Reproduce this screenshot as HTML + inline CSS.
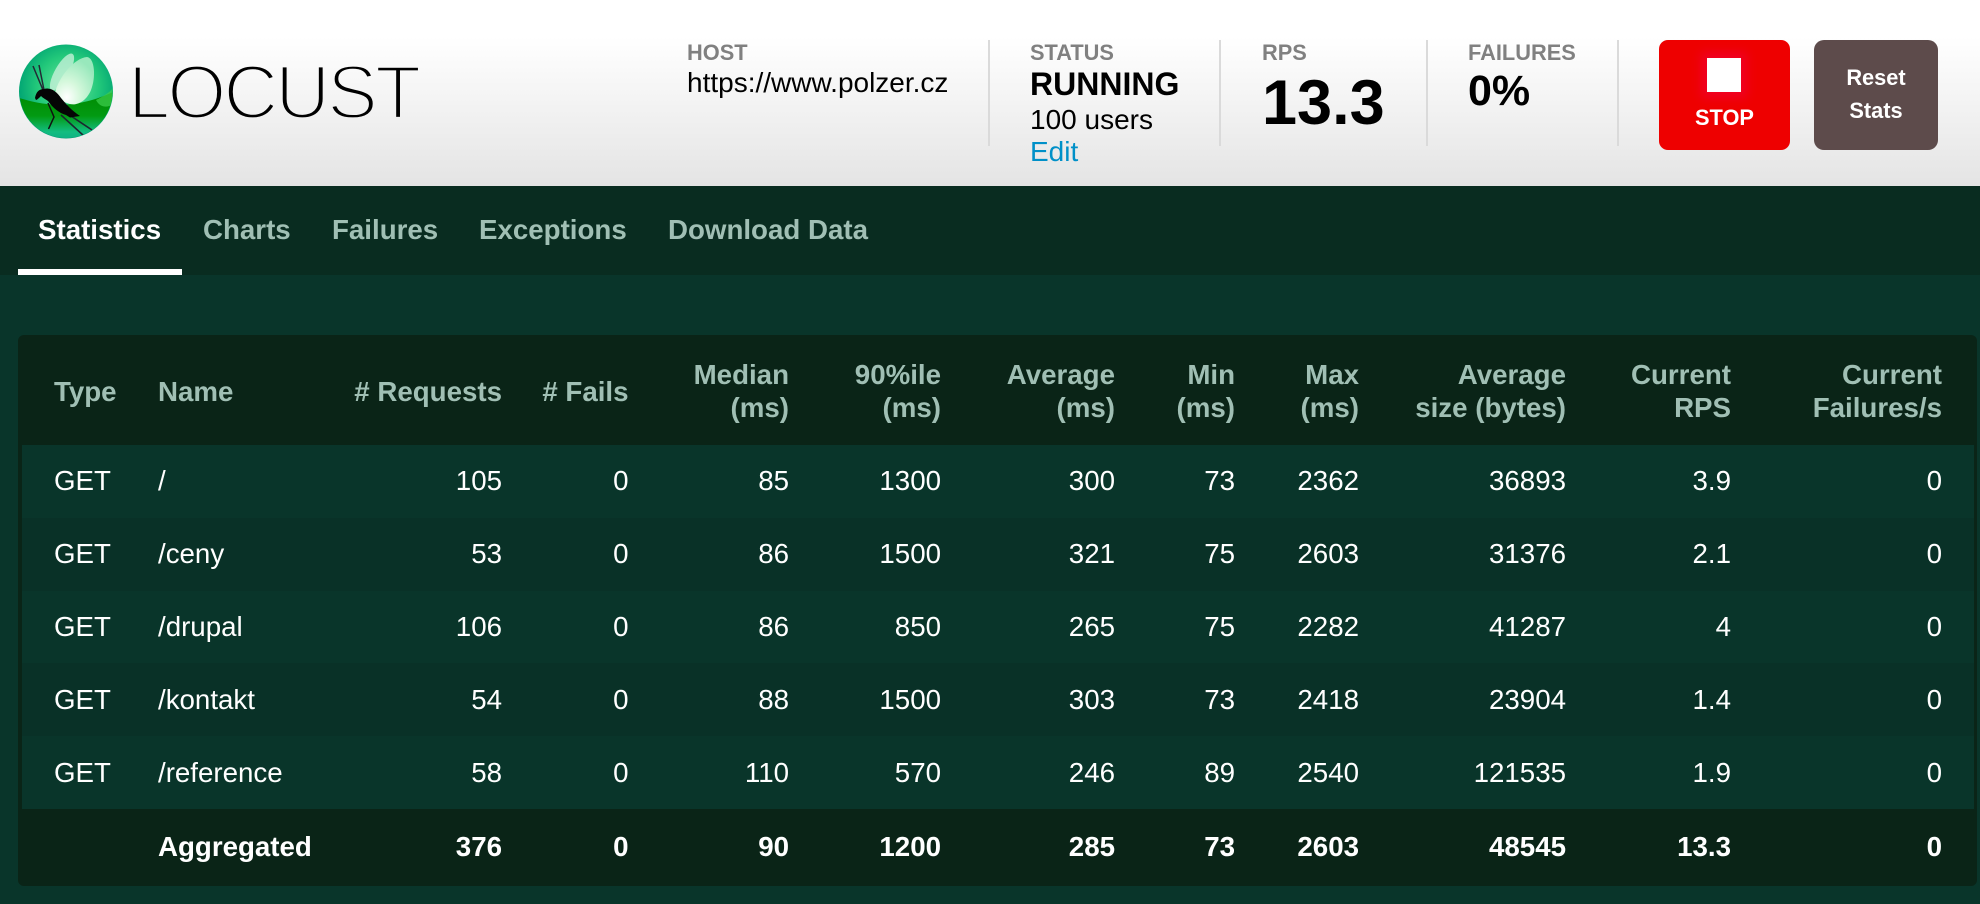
<!DOCTYPE html>
<html lang="en"><head><meta charset="utf-8"><title>Locust</title>
<style>
*{box-sizing:border-box}
html,body{margin:0;padding:0;width:1980px;height:904px;overflow:hidden;background:#09352a;font-family:"Liberation Sans",Arial,sans-serif}
.abs{position:absolute;white-space:nowrap;line-height:1}
header{position:absolute;left:0;top:0;width:1980px;height:186px;background:linear-gradient(#fff 0,#fff 20%,#e4e4e4 100%)}
.lbl{font-size:21.8px;font-weight:700;color:#808080}
.val{font-size:28px;color:#000}
.sep{position:absolute;top:40px;width:2px;height:106px;background:#dadada}
nav{position:absolute;left:0;top:186px;width:1980px;height:89px;background:#092c20}
nav span{position:absolute;top:30px;font-size:27.7px;line-height:1;font-weight:700;color:#a0bfb4;white-space:nowrap}
.ul{position:absolute;left:18px;top:83px;width:164px;height:6px;background:#fff}
.wrap{position:absolute;left:18px;top:335px;width:1959px;height:551px;background:#0a2417;border-radius:6px}
table{position:absolute;left:22px;top:335px;width:1952px;border-collapse:collapse;table-layout:fixed;font-size:27.7px;color:#fff}
th,td{padding:0;text-align:right;white-space:nowrap;overflow:visible}
th{height:110px;line-height:33px;color:#a0bfb4;font-weight:700;vertical-align:middle;padding-top:2px}
td{height:72.8px;line-height:32px}
.l{text-align:left}
tbody tr:nth-child(odd){background:#09352a}
tbody tr:nth-child(even){background:#093127}
tbody tr.agg{background:transparent;font-weight:700}
.agg td{height:77px}
</style></head><body>
<header>
<svg class="abs" style="left:0;top:0" width="440" height="186" viewBox="0 0 440 186">
<defs>
<linearGradient id="hg" gradientUnits="userSpaceOnUse" x1="0" y1="37" x2="0" y2="186"><stop offset="0" stop-color="#fff"/><stop offset="1" stop-color="#e4e4e4"/></linearGradient>
<radialGradient id="g1" cx="52%" cy="45%" r="60%"><stop offset="0" stop-color="#6fe8a0"/><stop offset=".55" stop-color="#22c87a"/><stop offset=".85" stop-color="#04a874"/><stop offset="1" stop-color="#068a72"/></radialGradient>
<linearGradient id="g2" x1="0" y1="0" x2="0" y2="1"><stop offset="0" stop-color="#008a00"/><stop offset=".45" stop-color="#029a12"/><stop offset=".75" stop-color="#12bd80"/><stop offset="1" stop-color="#0aa888"/></linearGradient>
<radialGradient id="g3" cx="30%" cy="85%" r="85%"><stop offset="0" stop-color="#fff"/><stop offset=".4" stop-color="#d5f8dc"/><stop offset="1" stop-color="#98e8bc"/></radialGradient>
<clipPath id="c"><circle cx="66" cy="91.5" r="46.5"/></clipPath>
</defs>
<circle cx="66" cy="91.5" r="47" fill="url(#g1)"/>
<g clip-path="url(#c)">
<path d="M19 98C40 104 70 112 113 92V145H19Z" fill="url(#g2)"/>
<path d="M96 100C104 96 110 92 113 88V104C108 108 100 108 96 100Z" fill="#3fd050" opacity=".7"/>
<ellipse cx="62" cy="72" rx="7" ry="21" transform="rotate(30 62 72)" fill="#cdf3de" opacity=".75"/>
<path d="M55 93C58 78 74 58 87 57C95 58 96 78 91 90C87 100 78 106 70 104C62 102 57 98 55 93Z" fill="url(#g3)"/>
<path d="M33 66L43 90M39 65L44 90" stroke="#232a35" stroke-width="1.5" fill="none"/>
<path d="M48 103L54 117L48.5 129" stroke="#101010" stroke-width="1.5" fill="none"/>
<path d="M61 115L84 136M68 114L92 130" stroke="#1c2630" stroke-width="1.6" fill="none"/>
<path d="M35 98C36 92 39 89 44 89C51 87 57 92 61 98C66 104 71 110 80 116L70 117.5L66 115C59 113 53 108 48 101C45 99 43 98 41 96C39 98 37 100 36 100Z" fill="#050505"/>
</g>
<text x="128" y="118.5" font-family="Liberation Sans,Arial,sans-serif" font-size="76" letter-spacing="-3" fill="#000" stroke="url(#hg)" stroke-width="3.2" style="paint-order:fill stroke">LOCUST</text>
</svg>
<div class="abs lbl" style="left:687px;top:42px">HOST</div>
<div class="abs val" style="left:687px;top:68.5px">https://www.polzer.cz</div>
<div class="sep" style="left:988px"></div>
<div class="abs lbl" style="left:1030px;top:42px">STATUS</div>
<div class="abs" style="left:1030px;top:68px;font-size:32px;font-weight:700;color:#000">RUNNING</div>
<div class="abs val" style="left:1030px;top:106px">100 users</div>
<div class="abs val" style="left:1030px;top:138px;color:#0090c8">Edit</div>
<div class="sep" style="left:1219px"></div>
<div class="abs lbl" style="left:1262px;top:42px">RPS</div>
<div class="abs" style="left:1262px;top:71.5px;font-size:63px;font-weight:700;color:#000">13.3</div>
<div class="sep" style="left:1426px"></div>
<div class="abs lbl" style="left:1468px;top:42px">FAILURES</div>
<div class="abs" style="left:1468px;top:70px;font-size:43px;font-weight:700;color:#000">0%</div>
<div class="sep" style="left:1617px"></div>
<div style="position:absolute;left:1659px;top:40px;width:131px;height:110px;border-radius:9px;background:#ee0000"></div>
<div style="position:absolute;left:1707px;top:58px;width:34px;height:34px;background:#fff;box-shadow:0 0 10px 6px #f00024"></div>
<div class="abs" style="left:1659px;top:107px;width:131px;text-align:center;font-size:21.8px;font-weight:700;color:#fff">STOP</div>
<div style="position:absolute;left:1814px;top:40px;width:124px;height:110px;border-radius:10px;background:#5d4b4b"></div>
<div class="abs" style="left:1814px;top:67px;width:124px;text-align:center;font-size:21.8px;font-weight:700;color:#fff">Reset</div>
<div class="abs" style="left:1814px;top:99.5px;width:124px;text-align:center;font-size:21.8px;font-weight:700;color:#fff">Stats</div>
</header>
<nav>
<span style="left:38px;color:#fff">Statistics</span>
<span style="left:203px">Charts</span>
<span style="left:332px">Failures</span>
<span style="left:479px">Exceptions</span>
<span style="left:668px">Download Data</span>
<div class="ul"></div>
</nav>
<div class="wrap"></div>
<table>
<colgroup><col style="width:136px"><col style="width:184px"><col style="width:160px"><col style="width:126.5px"><col style="width:160.5px"><col style="width:152px"><col style="width:174px"><col style="width:120px"><col style="width:124px"><col style="width:207px"><col style="width:165px"><col style="width:211px"><col style="width:32px"></colgroup>
<thead><tr><th class="l" style="padding-left:32px">Type</th><th class="l">Name</th><th># Requests</th><th># Fails</th><th>Median<br>(ms)</th><th>90%ile<br>(ms)</th><th>Average<br>(ms)</th><th>Min<br>(ms)</th><th>Max<br>(ms)</th><th>Average<br>size (bytes)</th><th>Current<br>RPS</th><th>Current<br>Failures/s</th><th></th></tr></thead>
<tbody>
<tr><td class="l" style="padding-left:32px">GET</td><td class="l">/</td><td>105</td><td>0</td><td>85</td><td>1300</td><td>300</td><td>73</td><td>2362</td><td>36893</td><td>3.9</td><td>0</td><td></td></tr>
<tr><td class="l" style="padding-left:32px">GET</td><td class="l">/ceny</td><td>53</td><td>0</td><td>86</td><td>1500</td><td>321</td><td>75</td><td>2603</td><td>31376</td><td>2.1</td><td>0</td><td></td></tr>
<tr><td class="l" style="padding-left:32px">GET</td><td class="l">/drupal</td><td>106</td><td>0</td><td>86</td><td>850</td><td>265</td><td>75</td><td>2282</td><td>41287</td><td>4</td><td>0</td><td></td></tr>
<tr><td class="l" style="padding-left:32px">GET</td><td class="l">/kontakt</td><td>54</td><td>0</td><td>88</td><td>1500</td><td>303</td><td>73</td><td>2418</td><td>23904</td><td>1.4</td><td>0</td><td></td></tr>
<tr><td class="l" style="padding-left:32px">GET</td><td class="l">/reference</td><td>58</td><td>0</td><td>110</td><td>570</td><td>246</td><td>89</td><td>2540</td><td>121535</td><td>1.9</td><td>0</td><td></td></tr>
<tr class="agg"><td></td><td class="l">Aggregated</td><td>376</td><td>0</td><td>90</td><td>1200</td><td>285</td><td>73</td><td>2603</td><td>48545</td><td>13.3</td><td>0</td><td></td></tr>
</tbody>
</table>
</body></html>
